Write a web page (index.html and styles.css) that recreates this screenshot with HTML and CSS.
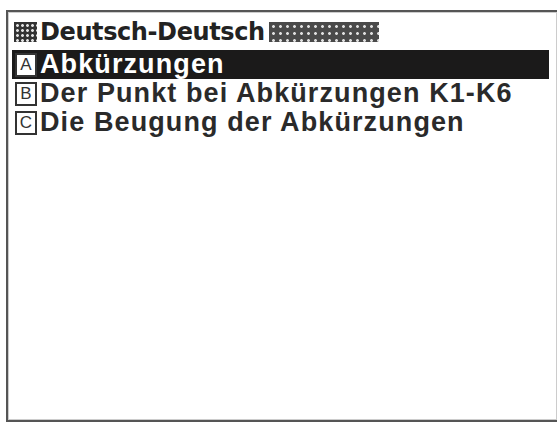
FILE: index.html
```html
<!DOCTYPE html>
<html lang="de">
<head>
  <meta charset="UTF-8">
  <meta name="viewport" content="width=device-width, initial-scale=1">
  <title>Deutsch-Deutsch</title>
  <link rel="stylesheet" href="styles.css">
</head>
<body>
  <div class="screen">
    <div class="title">
      <span class="hatch hatch-small"></span>
      <span class="title-text">Deutsch-Deutsch</span>
      <span class="hatch hatch-long"></span>
    </div>
    <ul class="menu">
      <li class="item selected"><span class="key">A</span><span class="label">Abkürzungen</span></li>
      <li class="item"><span class="key">B</span><span class="label">Der Punkt bei Abkürzungen K1-K6</span></li>
      <li class="item"><span class="key">C</span><span class="label">Die Beugung der Abkürzungen</span></li>
    </ul>
  </div>
</body>
</html>
```

FILE: styles.css
```css
body {
  margin: 0;
  background: #fff;
  font-family: 'Liberation Sans', Arial, sans-serif;
  color: #2a2a2a;
}
.screen {
  margin: 10px 0 0 6px;
  width: 541px;
  height: 408px;
  border: 2px solid #555;
  box-sizing: content-box;
  padding: 0 4px 0 4px;
  box-shadow: inset 0 0 0 1px #ccc;
}
.title {
  display: flex;
  align-items: center;
  height: 37px;
  padding-top: 1px;
}
.hatch {
  display: inline-block;
  height: 20px;
  background-color: #333;
  background-image: radial-gradient(circle, #e0e0e0 1.2px, transparent 1.6px);
  background-size: 5px 5px;
  background-position: 1px 1px;
}
.hatch-small {
  width: 23px;
  margin-left: 2px;
}
.hatch-long {
  width: 110px;
  margin-left: 4px;
  background-color: #4a4a4a;
  background-size: 7px 7px;
}
.title-text {
  font-family: 'DejaVu Sans', sans-serif;
  font-size: 24px;
  font-weight: bold;
  letter-spacing: -0.4px;
  margin-left: 3px;
  color: #222;
}
.menu {
  list-style: none;
  margin: 0;
  padding: 0;
}
.item {
  display: flex;
  align-items: center;
  height: 29px;
  font-size: 27px;
  font-weight: bold;
  white-space: nowrap;
}
.item.selected {
  background: #1b1a1a;
  color: #fff;
  margin-right: 4px;
}
.key {
  width: 18px;
  height: 20px;
  border: 2px solid #333;
  background: #fff;
  color: #333;
  font-size: 17px;
  font-weight: normal;
  display: flex;
  align-items: center;
  justify-content: center;
  margin-left: 3px;
  margin-right: 3px;
  line-height: 1;
}
.label {
  letter-spacing: 1.1px;
}
```
